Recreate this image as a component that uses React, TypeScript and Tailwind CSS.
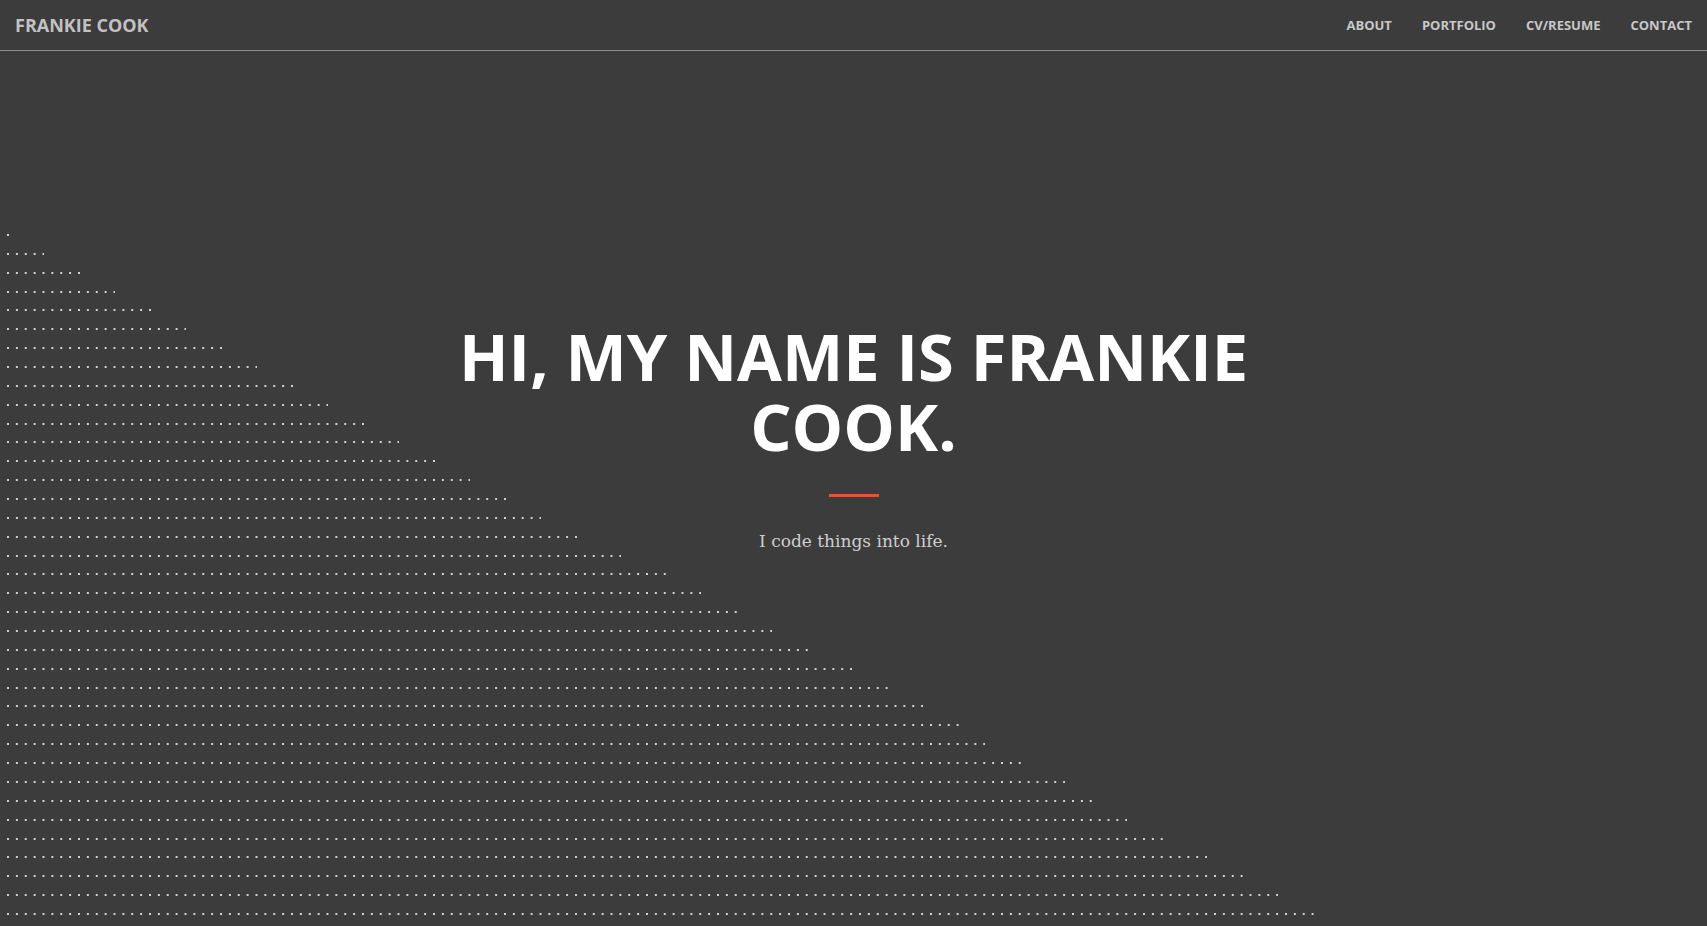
import React from "react";

const counts = [
  1, 5, 9, 13, 17, 21, 25, 29, 33, 37, 41, 45, 49, 53, 57, 61, 65, 70, 75, 79,
  83, 87, 91, 96, 100, 104, 108, 111, 115, 120, 123, 127, 131, 136, 140, 144, 148,
];

const SPACING = 8.88;

export default function App() {
  return (
    <div
      className="min-h-screen w-full bg-[#3c3c3c] overflow-hidden"
      style={{ fontFamily: '"Open Sans", "Liberation Sans", sans-serif' }}
    >
      <header className="h-[51px] flex items-center justify-between px-[15px] border-b border-[#8c8c8c]">
        <div className="text-[18px] font-bold text-[#c2c2c2] leading-none">
          FRANKIE COOK
        </div>
        <nav className="flex items-center gap-[30px] text-[13px] font-bold text-[#c8c8c8] leading-none pt-px">
          <a>ABOUT</a>
          <a>PORTFOLIO</a>
          <a>CV/RESUME</a>
          <a>CONTACT</a>
        </nav>
      </header>
      <main className="relative h-[875px]">
        <div className="absolute left-[6.5px] top-[183px] flex flex-col gap-[16.86px]">
          {counts.map((c, i) => (
            <div
              key={i}
              className="h-[2px] bg-[linear-gradient(90deg,#d2d2d2_2px,transparent_2px)] bg-[length:8.88px_2px] bg-repeat-x"
              style={{ width: `${(c - 1) * SPACING + 2}px` }}
            />
          ))}
        </div>
        <div className="relative flex flex-col items-center pt-[270px]">
          <h1 className="text-[65px] leading-[70px] font-bold text-white text-center w-[820px]">
            HI, MY NAME IS FRANKIE COOK.
          </h1>
          <div className="mt-[33px] w-[50px] h-[3px] bg-[#e0563b]" />
          <p
            className="mt-[31px] text-[17px] leading-[27px] text-[#cfcfcf]"
            style={{ fontFamily: '"DejaVu Serif", "Liberation Serif", serif' }}
          >
            I code things into life.
          </p>
        </div>
      </main>
    </div>
  );
}
